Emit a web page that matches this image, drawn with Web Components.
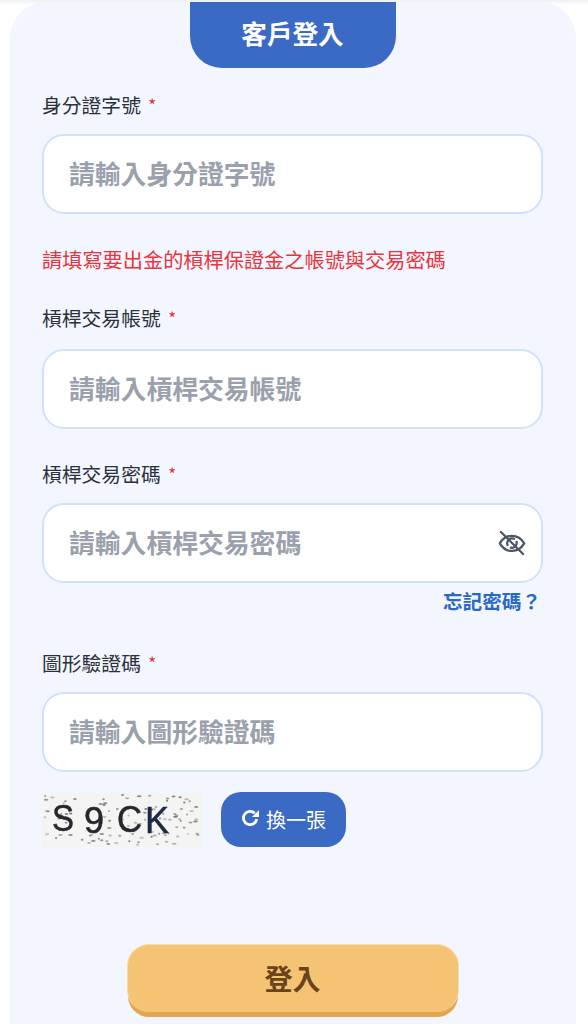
<!DOCTYPE html>
<html lang="zh-Hant"><head><meta charset="utf-8">
<style>
html,body{margin:0;padding:0;background:#fff;height:1024px;overflow:hidden}
body{font-family:"Noto Sans CJK TC","Noto Sans",sans-serif}
</style></head><body>
<login-page></login-page>
<script>
class LoginPage extends HTMLElement{constructor(){super();this.attachShadow({mode:'open'}).innerHTML=`<style>
:host{display:block;height:1024px;overflow:hidden;padding-top:2px;box-sizing:border-box;background:linear-gradient(#eff1f5 0,#f7f8fa 3px,#fff 4px)}
.card{margin:0 12px 0 10px;background:#f3f6fe;border-radius:36px 36px 0 0;height:1022px;box-sizing:border-box;padding:0 33px 0 32px;display:flex;flex-direction:column}
.tab{align-self:center;width:206px;height:66px;background:#3a6ac3;color:#fff;border-radius:0 0 32px 32px;font-size:25.600px;font-weight:700;display:flex;align-items:center;justify-content:center;padding-bottom:5px;box-sizing:border-box;flex:none}
.notice{color:#e8343c;font-size:20.200px;line-height:28px;margin-top:32px;white-space:nowrap}
login-field{margin-top:32px}
login-field.first{margin-top:24px}
login-field.after{margin-top:31px;--gap:16px}
login-field.cap{margin-top:35px}
.forgot{align-self:flex-end;margin:4px 2px 0 0;color:#2a68c8;font-size:19.600px;font-weight:700;line-height:28px;white-space:nowrap}
.row{display:flex;align-items:center;gap:19px;margin-top:20px}
.refresh{width:125px;height:55px;background:#3a6ac3;color:#fff;border-radius:20px;display:flex;align-items:center;justify-content:center;gap:6px;font-size:20px;box-sizing:border-box}
.refresh svg{display:block;width:19px;height:19px;margin-top:-3px}
.submit{align-self:center;margin-top:97px;width:332px;height:68px;box-sizing:border-box;background:#f4c474;border:1px solid #f8dcab;border-bottom:0;border-radius:22px;box-shadow:0 6px 0 -1px #e3a64e;color:#6a421b;font-size:28px;font-weight:700;display:flex;align-items:center;justify-content:center;flex:none;padding-bottom:2px}
</style>
<div class="card">
<div class="tab">客戶登入</div>
<login-field class="first" label="身分證字號" placeholder="請輸入身分證字號"></login-field>
<div class="notice">請填寫要出金的槓桿保證金之帳號與交易密碼</div>
<login-field class="after" label="槓桿交易帳號" placeholder="請輸入槓桿交易帳號"></login-field>
<login-field label="槓桿交易密碼" placeholder="請輸入槓桿交易密碼"><svg slot="suffix" width="28" height="28" viewBox="0 0 24 24" fill="none" stroke="#4b5563" stroke-width="1.9" stroke-linecap="round" stroke-linejoin="round"><path d="M1.500 12.300C4 8 7.600 5.800 12 5.800s8 2.200 10.500 6.500c-2.500 4.300-6.100 6.500-10.500 6.500S4 16.600 1.500 12.300Z"/><path d="M8.200 13.800A4.200 4.200 0 0 1 13.800 8.400M15.900 10.900A4.200 4.200 0 0 1 11 16"/><path d="M2.500 2.500 21.500 21.500"/></svg></login-field>
<div class="forgot">忘記密碼？</div>
<login-field class="cap" label="圖形驗證碼" placeholder="請輸入圖形驗證碼"></login-field>
<div class="row"><captcha-image></captcha-image><div class="refresh"><svg viewBox="0 0 20 20" fill="none"><path d="M16.500 10.500A7 7 0 1 1 14.500 4.500" stroke="#fff" stroke-width="3"/><path d="M19 1v7.500h-7.500z" fill="#fff"/></svg>換一張</div></div>
<div class="submit">登入</div>
</div>`}}
class LoginField extends HTMLElement{constructor(){super();this.attachShadow({mode:'open'})}
connectedCallback(){this.shadowRoot.innerHTML=`<style>
:host{display:block;flex:none}
.l{font-size:19.800px;line-height:28px;color:#2b303a;white-space:nowrap;margin-top:-1px;padding-bottom:1px}
.l i{color:#e8343c;font-style:normal;margin-left:3px;font-size:17px;vertical-align:1px}
.b{margin-top:var(--gap,14px);height:80px;box-sizing:border-box;background:#fff;border:2px solid #cfe2fa;border-radius:22px;display:flex;align-items:center;justify-content:space-between;padding:0 15px 0 25px}
.p{font-size:25.800px;font-weight:700;color:#9aa1ad;white-space:nowrap;margin-top:-4px}
</style><div class="l">${this.getAttribute('label')} <i>*</i></div><div class="b"><span class="p">${this.getAttribute('placeholder')}</span><slot name="suffix"></slot></div>`}}
class CaptchaImage extends HTMLElement{constructor(){super();let d='',s=11;const r=()=>(s=(s*16807)%2147483647)/2147483647;for(let i=0;i<110;i++){const x=(3+r()*153).toFixed(1),y=(2+r()*50).toFixed(1);d+=`<ellipse cx="${x}" cy="${y}" rx="${(1+r()*1.4).toFixed(1)}" ry="1" fill="#5f6368" opacity="${(.35+r()*.45).toFixed(2)}"/>`}
this.attachShadow({mode:'open'}).innerHTML=`<style>:host{display:block;width:160px;height:54px;flex:none}svg{display:block}text{font-family:"Liberation Sans",sans-serif;font-size:36px;fill:#24272b;stroke:#24272b;stroke-width:.5px}.g{filter:blur(.45px)}</style><svg width="160" height="54" viewBox="0 0 160 54"><rect width="160" height="54" fill="#f4f4f3"/><g class="g">${d}<text x="10" y="38" textLength="22" lengthAdjust="spacingAndGlyphs">S</text><text x="42" y="40">9</text><text x="75" y="39" textLength="25" lengthAdjust="spacingAndGlyphs">C</text><text x="103" y="40" textLength="24" lengthAdjust="spacingAndGlyphs" style="fill:#1c2a44;stroke:#1c2a44">K</text></g></svg>`}}
customElements.define('login-field',LoginField);customElements.define('captcha-image',CaptchaImage);customElements.define('login-page',LoginPage);
</script></body></html>
